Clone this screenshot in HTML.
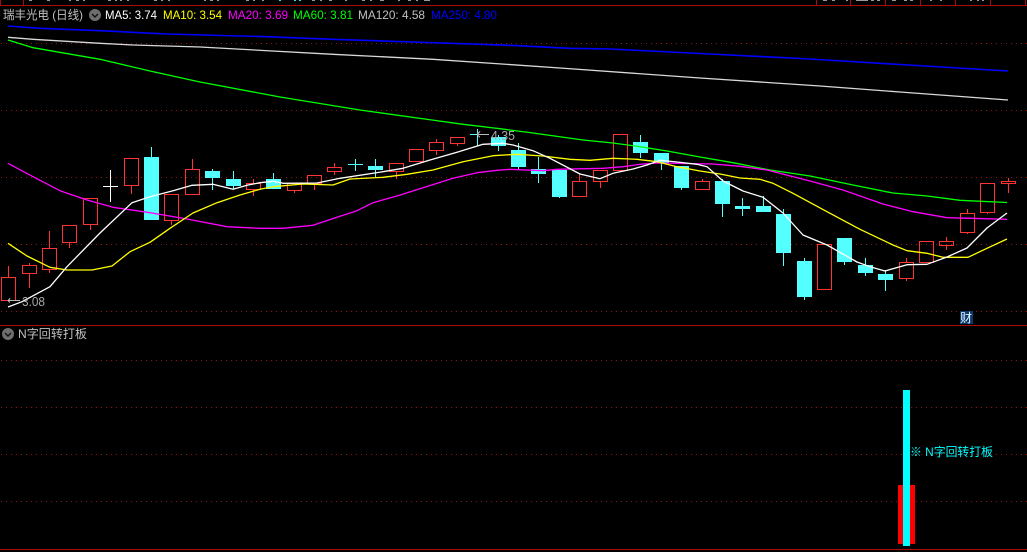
<!DOCTYPE html>
<html>
<head>
<meta charset="utf-8">
<title>瑞丰光电 (日线)</title>
<style>
html,body{margin:0;padding:0;background:#000;width:1027px;height:552px;overflow:hidden}
svg{display:block}
text{font-family:"Liberation Sans","WenQuanYi Zen Hei","Noto Sans CJK SC",sans-serif;font-size:12px}
</style>
</head>
<body>
<svg width="1027" height="552" viewBox="0 0 1027 552" xmlns="http://www.w3.org/2000/svg">
<rect width="1027" height="552" fill="#000"/>
<g shape-rendering="crispEdges">
<!-- grid -->
<g stroke="#8a1616" stroke-width="1" stroke-dasharray="1 4" fill="none">
<path d="M1 43.5H1027M1 110.5H1027M1 177.5H1027M1 244.5H1027M1 311.5H1027M1 360.5H1027M1 407.5H1027M1 454.5H1027M1 501.5H1027"/>
</g>
<!-- frame -->
<path d="M0 5.5H1027M0 325.5H1027M0 549.5H1027M23.5 0V5M0.5 0V5M816.5 0V5M850.5 0V5M885.5 0V5M920.5 0V5M955.5 0V5M990.5 0V5M1025.5 0V5" stroke="#a80d0d" fill="none"/>
<!-- clipped top fragments -->
<path d="M29 0h3v1h-3zM47 0h3v1h-3zM69 0h2v1h-2zM76 0h3v1h-3zM83 0h2v1h-2zM108 0h3v1h-3zM115 0h2v1h-2zM120 0h2v1h-2zM127 0h2v1h-2zM154 0h3v1h-3zM161 0h2v1h-2zM168 0h2v1h-2zM204 0h2v1h-2zM210 0h3v1h-3zM217 0h2v1h-2zM246 0h3v1h-3zM253 0h2v1h-2zM262 0h2v1h-2zM312 0h3v1h-3zM320 0h2v1h-2zM329 0h3v1h-3zM345 0h2v1h-2zM362 0h3v1h-3zM370 0h2v1h-2zM380 0h4v1h-4zM398 0h2v1h-2zM408 0h3v1h-3zM416 0h2v1h-2zM424 0h6v1h-6zM823 0h4v1h-4zM832 0h3v1h-3zM846 0h2v1h-2zM856 0h12v1h-12zM871 0h3v1h-3zM877 0h3v1h-3zM892 0h4v1h-4zM904 0h3v1h-3zM910 0h3v1h-3zM930 0h2v1h-2zM940 0h2v1h-2zM970 0h2v1h-2zM977 0h2v1h-2zM982 0h2v1h-2z" fill="#9a9a9a"/>
<path d="M279 0h2v1h-2zM294 0h2v1h-2zM299 0h2v1h-2z" fill="#35e0e0"/>
<!-- red candles -->
<path fill="none" stroke="#ff3333" d="M1.5 277.5h14v23h-14zM8.5 266v11
M22.5 265.5h14v8h-14zM29.5 263v2M29.5 274v14
M42.5 248.5h14v21h-14zM49.5 231v17M49.5 270v3
M62.5 225.5h14v17h-14zM69.5 243v5
M83.5 198.5h14v26h-14zM90.5 225v5
M124.5 158.5h14v27h-14zM131.5 186v8
M164.5 194.5h14v26h-14zM171.5 221v4
M185.5 169.5h14v25h-14zM192.5 159v10
M246.5 183.5h14v6h-14zM253.5 179v4M253.5 190v6
M287.5 183.5h14v7h-14zM294.5 191v2
M307.5 175.5h14v8h-14zM314.5 184v6
M327.5 167.5h14v4h-14zM334.5 163v4M334.5 172v3
M389.5 163.5h14v8h-14zM396.5 172v7
M409.5 149.5h14v12h-14z
M429.5 142.5h14v8h-14zM436.5 139v3M436.5 151v4
M450.5 137.5h14v6h-14zM457.5 144v2
M572.5 181.5h14v15h-14zM579.5 173v8
M593.5 170.5h14v11h-14zM600.5 182v6
M613.5 134.5h14v36h-14z
M695.5 181.5h14v8h-14zM702.5 179v2
M817.5 244.5h14v45h-14z
M899.5 262.5h14v16h-14zM906.5 258v4M906.5 279v2
M919.5 241.5h14v21h-14z
M939.5 241.5h14v4h-14zM946.5 237v4M946.5 246v4
M960.5 213.5h14v19h-14zM967.5 209v4M967.5 233v1
M980.5 183.5h14v29h-14zM987.5 213v1
M1001.5 181.5h14v2h-14zM1008.5 178v3M1008.5 184v9"/>
<!-- cyan wicks -->
<path fill="none" stroke="#54ffff" d="M151.5 147v10
M212.5 169v2M212.5 178v12
M233.5 171v8M233.5 186v3
M273.5 173v6
M375.5 159v7M375.5 170v7
M498.5 135v2M498.5 146v5
M518.5 143v7M518.5 167v2
M538.5 157v12M538.5 174v9
M559.5 197v1
M640.5 135v7M640.5 153v5
M661.5 163v7
M681.5 188v2
M722.5 179v2M722.5 204v13
M742.5 198v8M742.5 209v7
M763.5 196v10
M783.5 209v5M783.5 253v13
M804.5 258v3M804.5 297v3
M844.5 262v3
M865.5 258v7M865.5 273v3
M885.5 270v4M885.5 280v11
M355.5 159v12M348 164.5h15
M477.5 129v17M470 134.5h15"/>
<!-- cyan bodies -->
<path fill="#54ffff" d="M144 157h15v63h-15z
M205 171h15v7h-15z
M226 179h15v7h-15z
M266 179h15v10h-15z
M368 166h15v4h-15z
M491 137h15v9h-15z
M511 150h15v17h-15z
M531 169h15v5h-15z
M552 170h15v27h-15z
M633 142h15v11h-15z
M654 153h15v10h-15z
M674 166h15v22h-15z
M715 181h15v23h-15z
M735 206h15v3h-15z
M756 206h15v6h-15z
M776 214h15v39h-15z
M797 261h15v36h-15z
M837 238h15v24h-15z
M858 265h15v8h-15z
M878 274h15v6h-15z"/>
<!-- white cross -->
<path fill="none" stroke="#fff" d="M110.5 170v32M103 186.5h15"/>
</g>
<!-- MA lines -->
<g fill="none" stroke-width="1.3" stroke-linejoin="round">
<polyline stroke="#0000ff" stroke-width="1.6" points="8,26 40,28.3 100,30.7 167,34 267,36.7 333,39.3 433,42.7 510,45.3 570,48.3 610,49 710,54 810,59 900,64.5 1008,71"/>
<polyline stroke="#d8d8d8" points="8,37.3 33,39.3 100,43.3 133,45 200,47 333,54.3 433,59.3 560,68 700,78 820,86 900,92 1008,100"/>
<polyline stroke="#00ff00" points="8,40 33,47.7 100,59.3 150,71 200,82 280,97 360,110 432,120 463,124.3 500,128.7 533,133 583,140 613,143 640,146.7 667,151 700,157 733,162.7 770,170 810,176 853,185 893,193 927,196 960,200.3 1007,202.5"/>
<polyline stroke="#ff00ff" points="8,163.3 33,176.7 60,190.7 87,200 113,207.3 150,212.7 187,219 227,226.7 260,228.3 283,228.3 313,225.3 337,217.3 357,210.7 373,202.7 397,196 423,187.7 453,178.3 477,172.7 497,170.3 510,169.3 543,170.7 557,169.3 603,168.3 623,166.7 640,164.3 657,163 713,164 740,166.3 767,170 810,181 843,190 883,204 913,211.7 947,217.7 1007,219.3"/>
<polyline stroke="#ffff00" points="8,243.3 27,256 50,267.3 67,270 92,270 112,266 130,251.7 150,242.3 170,228.3 193,213 217,202.7 240,195 260,189.3 273,186.7 303,184 333,185 350,179 383,177.3 407,174.3 433,170 463,161.7 493,155.7 517,154.3 543,156 570,159.3 590,160.3 613,158.3 637,159.3 657,161.7 677,166.7 700,171 720,174 740,178 760,179.3 773,183.3 793,193.3 827,211.7 860,229.3 893,245 907,250.7 927,253.3 943,257.3 968,257.3 987,248.3 1007,239"/>
<polyline stroke="#ffffff" points="8,307 22,301.7 50,286.7 67,266.7 100,233 132,202.7 150,196.7 173,190.7 192,185.3 213,184.3 233,189.3 248,185 260,182.7 273,181.3 283,183.3 317,183 340,178.3 383,171.7 403,168.3 430,160 457,152.3 483,144.3 503,143.3 513,145 533,150.7 550,158.3 580,174 600,178.7 613,173.3 633,169 647,165 660,160.3 677,162 697,164.3 707,166.7 723,181 743,191 763,197.3 783,213 803,235 827,245 857,262 870,266.7 885,271 907,264.7 927,264.3 947,257 967,248 987,228 1007,213"/>
</g>
<g shape-rendering="crispEdges">
<!-- high / low arrows -->
<path fill="none" stroke="#b8b8b8" d="M8 300.5H20M8 300.5l2-2M8 300.5l2 2M477 134.5H489M477 134.5l3-3M477 134.5l3 3"/>
<!-- lower pane bars -->
<rect x="898" y="485" width="17" height="59" fill="#ff0000"/>
<rect x="903" y="390" width="7" height="156" fill="#00ffff"/>
<!-- 财 badge -->
<rect x="960" y="311" width="13" height="13" fill="#0a3a6c"/>
</g>

<!-- round toggles -->
<circle cx="95" cy="15" r="6" fill="#6e6e6e"/>
<path d="M92 14l3 3 3-3" fill="none" stroke="#111" stroke-width="1.4"/>
<circle cx="8" cy="334" r="6" fill="#6e6e6e"/>
<path d="M5 333l3 3 3-3" fill="none" stroke="#111" stroke-width="1.4"/>

<!-- legend -->
<text x="3" y="19" fill="#c0c0c0" textLength="80" lengthAdjust="spacingAndGlyphs">瑞丰光电 (日线)</text>
<text x="105" y="19" fill="#ffffff" textLength="52" lengthAdjust="spacingAndGlyphs">MA5: 3.74</text>
<text x="163" y="19" fill="#ffff00" textLength="59" lengthAdjust="spacingAndGlyphs">MA10: 3.54</text>
<text x="228" y="19" fill="#ff00ff" textLength="60" lengthAdjust="spacingAndGlyphs">MA20: 3.69</text>
<text x="293" y="19" fill="#00ff00" textLength="60" lengthAdjust="spacingAndGlyphs">MA60: 3.81</text>
<text x="358" y="19" fill="#c0c0c0" textLength="67" lengthAdjust="spacingAndGlyphs">MA120: 4.58</text>
<text x="431" y="19" fill="#0000ff" textLength="66" lengthAdjust="spacingAndGlyphs">MA250: 4.80</text>

<!-- labels -->
<text x="22" y="306" fill="#a8a8a8" style="font-size:13px" textLength="23" lengthAdjust="spacingAndGlyphs">3.08</text>
<text x="491" y="140" fill="#a8a8a8" style="font-size:13px" textLength="24" lengthAdjust="spacingAndGlyphs">4.35</text>
<text x="960" y="322" fill="#e8f4ff">财</text>
<text x="18" y="338" fill="#c0c0c0" textLength="69" lengthAdjust="spacingAndGlyphs">N字回转打板</text>
<text x="910" y="456" fill="#00ffff" textLength="83" lengthAdjust="spacingAndGlyphs">※ N字回转打板</text>
</svg>
</body>
</html>
